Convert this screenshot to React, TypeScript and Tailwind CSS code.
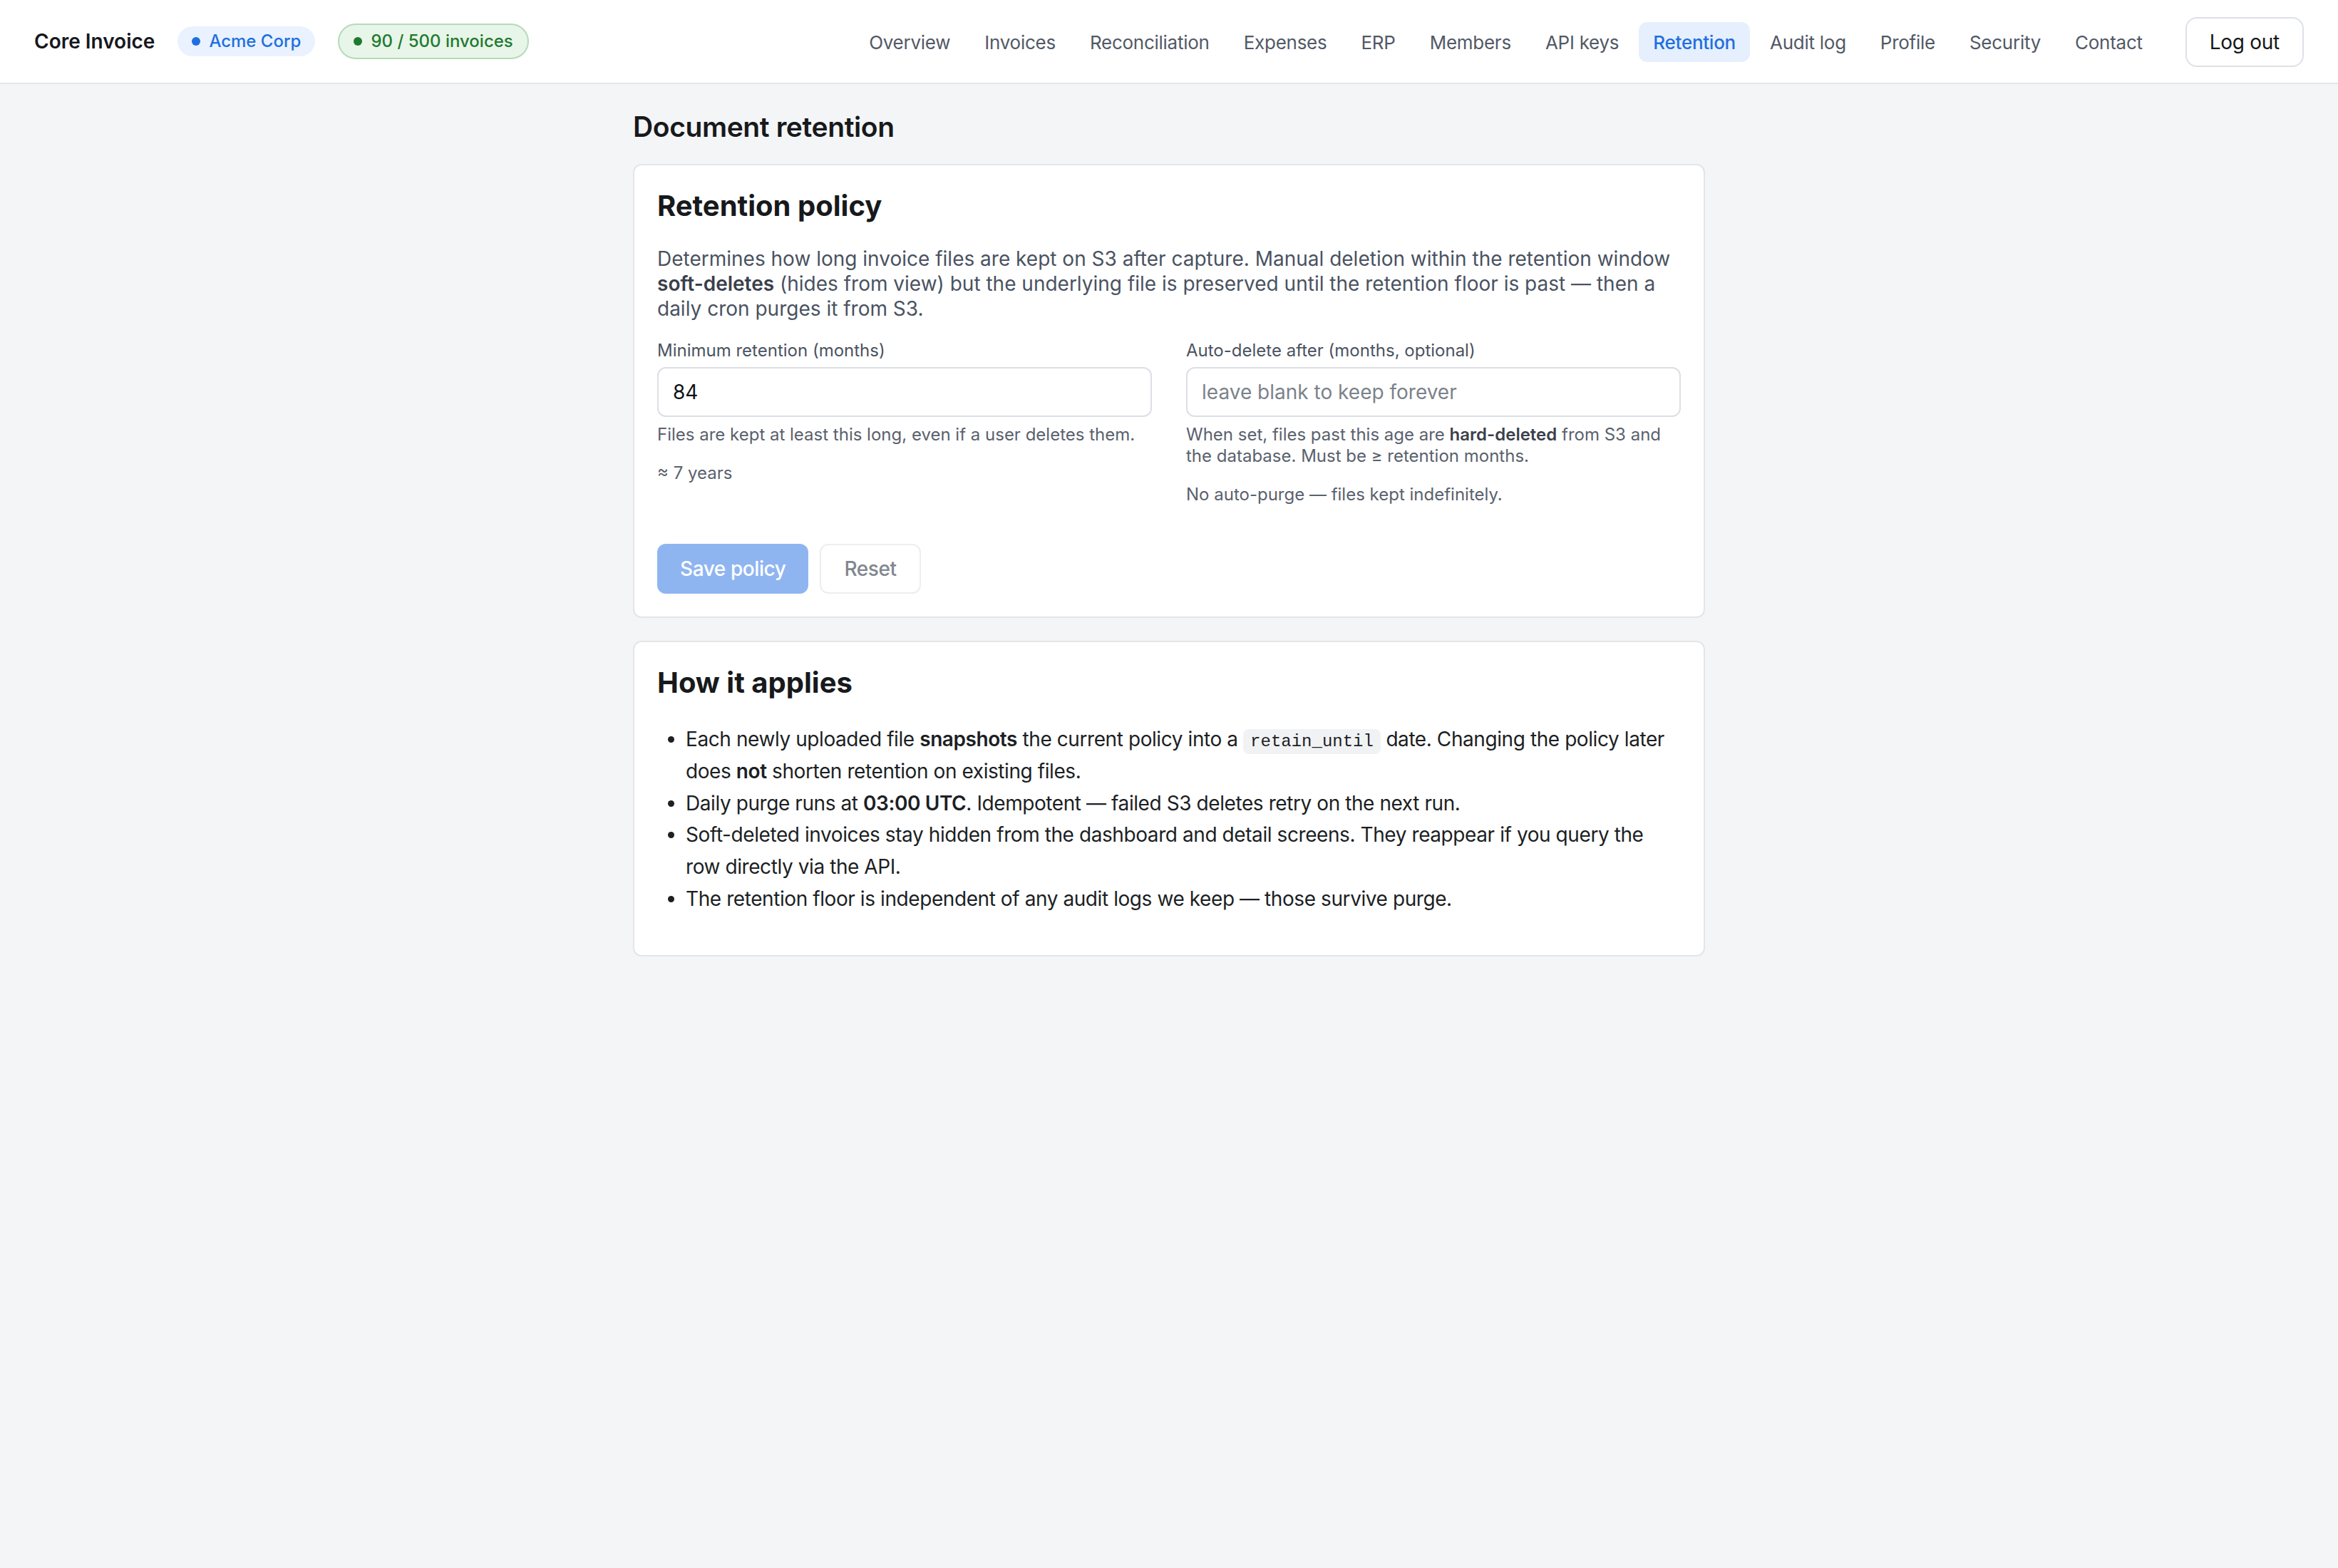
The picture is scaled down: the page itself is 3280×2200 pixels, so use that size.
const navItems = [
  "Overview",
  "Invoices",
  "Reconciliation",
  "Expenses",
  "ERP",
  "Members",
  "API keys",
  "Retention",
  "Audit log",
  "Profile",
  "Security",
  "Contact",
];

function Header() {
  return (
    <header className="h-[59px] bg-white border-b border-[#e3e6ea] flex items-center justify-between px-6">
      <div className="flex items-center">
        <span className="text-[14px] font-semibold text-[#16181d]">Core Invoice</span>
        <span className="ml-4 h-[21px] px-2.5 rounded-full bg-[#e9f2fe] text-[#1f6fe0] text-[12px] font-medium flex items-center gap-1.5">
          <span className="w-1.5 h-1.5 rounded-full bg-[#1f6fe0]" />
          Acme Corp
        </span>
        <span className="ml-4 h-[25px] px-2.5 rounded-full bg-[#e8f5e9] border border-[#b5dbb8] text-[#1f7a30] text-[12px] font-medium flex items-center gap-1.5">
          <span className="w-1.5 h-1.5 rounded-full bg-[#1f7a30]" />
          90 / 500 invoices
        </span>
      </div>
      <div className="flex items-center pt-px">
        <nav className="flex items-center gap-1">
          {navItems.map((item) => (
            <a
              key={item}
              className={
                item === "Retention"
                  ? "h-7 px-2.5 rounded-md bg-[#e6effd] text-[#1f6fe0] text-[13px] tracking-[-0.01em] font-medium flex items-center"
                  : "h-7 px-2.5 rounded-md text-[#525966] text-[13px] tracking-[-0.01em] flex items-center"
              }
            >
              {item}
            </a>
          ))}
        </nav>
        <button className="ml-5 h-[35px] px-4 rounded-lg border border-[#dde1e6] bg-white text-[14px] tracking-[-0.01em] text-[#15171a]">
          Log out
        </button>
      </div>
    </header>
  );
}

function RetentionPolicy() {
  return (
    <section className="bg-white border border-[#e2e5e9] rounded-md p-4">
      <h2 className="text-[20px] leading-[25px] font-bold text-[#17191c] mb-4">Retention policy</h2>
      <p className="text-[14px] leading-[17.5px] text-[#4a5261] mb-[13px]">
        Determines how long invoice files are kept on S3 after capture. Manual deletion within the retention window{" "}
        <strong className="font-semibold text-[#3a404b]">soft-deletes</strong> (hides from view) but the underlying file is
        preserved until the retention floor is past — then a daily cron purges it from S3.
      </p>
      <div className="grid grid-cols-2 gap-6">
        <div>
          <label className="block text-[12px] leading-[15px] text-[#4b5360] mb-1">Minimum retention (months)</label>
          <input
            defaultValue="84"
            className="w-full h-[35px] px-2.5 rounded-md border border-[#dcdfe4] bg-white text-[14px] text-[#111318] outline-none"
          />
          <p className="mt-[5px] text-[12px] leading-[15px] text-[#5a616d]">
            Files are kept at least this long, even if a user deletes them.
          </p>
          <p className="mt-3 text-[12px] leading-[15px] text-[#5a616d]">≈ 7 years</p>
        </div>
        <div>
          <label className="block text-[12px] leading-[15px] text-[#4b5360] mb-1">Auto-delete after (months, optional)</label>
          <input
            placeholder="leave blank to keep forever"
            className="w-full h-[35px] px-2.5 rounded-md border border-[#dcdfe4] bg-white text-[14px] text-[#111318] placeholder:text-[#7c828b] outline-none"
          />
          <p className="mt-[5px] text-[12px] leading-[15px] text-[#5a616d]">
            When set, files past this age are <strong className="font-semibold text-[#3a404b]">hard-deleted</strong> from S3
            and the database. Must be ≥ retention months.
          </p>
          <p className="mt-3 text-[12px] leading-[15px] text-[#5a616d]">No auto-purge — files kept indefinitely.</p>
        </div>
      </div>
      <div className="mt-[27px] flex items-center gap-2">
        <button className="h-[35px] px-4 rounded-md bg-[#8fb5f1] text-white text-[14px] tracking-[-0.015em] font-medium">
          Save policy
        </button>
        <button className="h-[35px] px-4 rounded-md border border-[#eceef1] bg-white text-[#81868e] text-[14px] tracking-[-0.015em] font-medium">
          Reset
        </button>
      </div>
    </section>
  );
}

function HowItApplies() {
  return (
    <section className="mt-4 bg-white border border-[#e2e5e9] rounded-md p-4">
      <h2 className="text-[20px] leading-[25px] font-bold text-[#17191c] mb-4">How it applies</h2>
      <ul className="list-disc pl-5 text-[14px] leading-[22.4px] tracking-[-0.015em] text-[#1c1f24] mb-3">
        <li>
          Each newly uploaded file <strong className="font-semibold">snapshots</strong> the current policy into a{" "}
          <code className="font-['Liberation_Mono',monospace] text-[12px] leading-none tracking-normal bg-[#f1f2f4] rounded px-[5px] py-[2px]">
            retain_until
          </code>{" "}
          date. Changing the policy later does <strong className="font-semibold">not</strong> shorten retention on existing
          files.
        </li>
        <li>
          Daily purge runs at <strong className="font-semibold">03:00 UTC</strong>. Idempotent — failed S3 deletes retry on
          the next run.
        </li>
        <li>
          Soft-deleted invoices stay hidden from the dashboard and detail screens. They reappear if you query the row
          directly via the API.
        </li>
        <li>The retention floor is independent of any audit logs we keep — those survive purge.</li>
      </ul>
    </section>
  );
}

export default function App() {
  return (
    <div className="min-h-screen bg-[#f4f5f7] font-['Inter',sans-serif]">
      <div className="[zoom:2]">
        <Header />
        <main className="w-[752px] mx-auto pt-4 pb-10">
          <h1 className="text-[19.5px] leading-[28px] tracking-[-0.01em] font-semibold text-[#17191c] mb-3">
            Document retention
          </h1>
          <RetentionPolicy />
          <HowItApplies />
        </main>
      </div>
    </div>
  );
}
